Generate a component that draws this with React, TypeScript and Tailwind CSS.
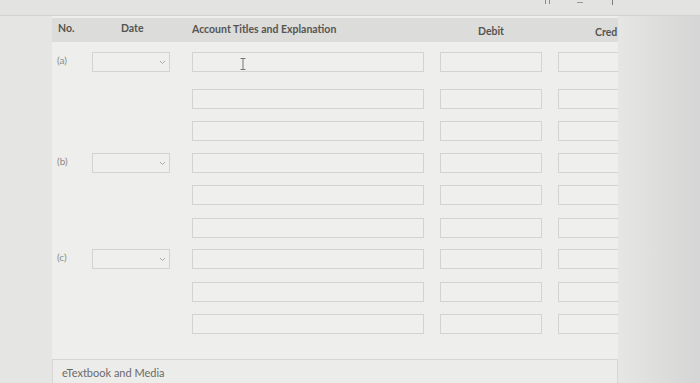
import React from 'react';

const font = { fontFamily: 'Lato, "Liberation Sans", sans-serif' };

function Box({ w, children }: { w: string; children?: React.ReactNode }) {
  return (
    <div className={`${w} h-[20px] shrink-0 border border-[#d3d3d1] bg-[#efefed] relative`}>
      {children}
    </div>
  );
}

function DateSelect() {
  return (
    <div className="w-[78px] h-[20px] shrink-0 border border-[#d3d3d1] bg-[#efefed] flex items-center justify-end pr-[3px]">
      <svg width="7" height="5" viewBox="0 0 7 5" fill="none">
        <path d="M1 1l2.5 2.5L6 1" stroke="#a9a9a7" strokeWidth="1" />
      </svg>
    </div>
  );
}

interface RowProps {
  label?: string;
  cursor?: boolean;
  mt: string;
}

function Row({ label, cursor, mt }: RowProps) {
  return (
    <div className={`flex items-center h-[20px] ${mt}`}>
      <div className="w-[38px] shrink-0 pl-[5px] -mt-[3px] text-[10px] text-[#8a8a88]">{label}</div>
      <div className="w-[78px] shrink-0 pl-[2px]">{label && <DateSelect />}</div>
      <div className="w-[24px] shrink-0" />
      <Box w="w-[232px]">
        {cursor && (
          <svg className="absolute left-[47px] top-[5px]" width="6" height="12" viewBox="0 0 6 12" fill="none">
            <path d="M0.5 0.5h5M3 0.5v11M0.5 11.5h5" stroke="#777" strokeWidth="1" />
          </svg>
        )}
      </Box>
      <div className="w-[16px] shrink-0" />
      <Box w="w-[102px]" />
      <div className="w-[16px] shrink-0" />
      <Box w="w-[90px]" />
    </div>
  );
}

export default function App() {
  return (
    <div className="w-[700px] h-[383px] overflow-hidden bg-[#e2e2e0] flex flex-col" style={font}>
      <div className="h-[16px] shrink-0 border-b border-[#d2d2d0] bg-[#e3e3e1] relative">
        <span className="absolute left-[545px] top-0 w-[1px] h-[4px] bg-[#8c8c8a]" />
        <span className="absolute left-[549px] top-0 w-[1px] h-[4px] bg-[#8c8c8a]" />
        <span className="absolute left-[577px] top-[2px] w-[6px] h-[1px] bg-[#9a9a98]" />
        <span className="absolute left-[612px] top-0 w-[1px] h-[5px] bg-[#7c7c7a]" />
      </div>
      <div className="flex flex-1 min-h-0">
        <div className="w-[52px] shrink-0 bg-[#e5e5e3]" />
        <div className="w-[566px] shrink-0 bg-[#eeeeec] overflow-hidden flex flex-col">
          <div className="mt-[2px] h-[24px] shrink-0 bg-[#dcdcda] flex items-center text-[10.5px] font-bold text-[#555553] whitespace-nowrap">
            <div className="w-[38px] shrink-0 pl-[6px] -mt-[2px]">No.</div>
            <div className="w-[78px] shrink-0 pl-[31px] -mt-[2px]">Date</div>
            <div className="w-[24px] shrink-0" />
            <div className="w-[232px] shrink-0">Account Titles and Explanation</div>
            <div className="w-[16px] shrink-0" />
            <div className="w-[102px] shrink-0 text-center pt-[3px]">Debit</div>
            <div className="w-[16px] shrink-0" />
            <div className="pl-[37px] pt-[5px]">Cred</div>
          </div>
          <Row label="(a)" cursor mt="mt-[10px]" />
          <Row mt="mt-[17px]" />
          <Row mt="mt-[12px]" />
          <Row label="(b)" mt="mt-[12px]" />
          <Row mt="mt-[12px]" />
          <Row mt="mt-[13px]" />
          <Row label="(c)" mt="mt-[11px]" />
          <Row mt="mt-[13px]" />
          <Row mt="mt-[12px]" />
          <div className="mt-[25px] h-[30px] shrink-0 border border-[#d6d6d4] bg-[#ececea] pl-[9px] pt-[5px] text-[11px] text-[#6a6a68]">
            eTextbook and Media
          </div>
        </div>
        <div className="flex-1 bg-gradient-to-r from-[#e6e6e4] to-[#d5d5d5]" />
      </div>
    </div>
  );
}
